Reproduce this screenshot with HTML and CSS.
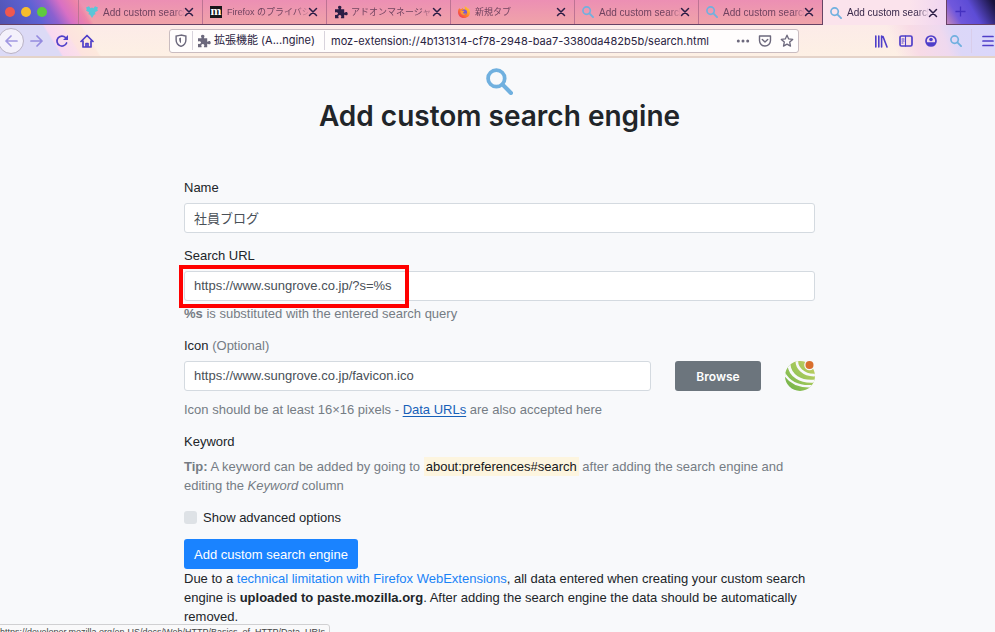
FILE: index.html
```html
<!DOCTYPE html>
<html lang="en">
<head>
<meta charset="utf-8">
<title>Add custom search engine</title>
<link rel="stylesheet" href="styles.css">
</head>
<body>
<svg class="defs" aria-hidden="true">
  <symbol id="lens" viewBox="0 0 26 26"><circle cx="10" cy="10" r="8" fill="none" stroke="#70b0df" stroke-width="3.6"/><path d="M16 16l8 8" stroke="#70b0df" stroke-width="4" stroke-linecap="round"/></symbol>
  <symbol id="close" viewBox="0 0 10 10"><path d="M1.5 1.5l7 7m0-7l-7 7" stroke="#2b1d45" stroke-width="1.5" stroke-linecap="round"/></symbol>
  <symbol id="puzzle" viewBox="0 0 14 14"><path d="M1 4.200h3.200c.5 0 .5-.5.1-1C3.500 2 4.300.8 5.700.8S8 2 7.200 3.200c-.4.6-.3 1 .2 1h2.800v3c0 .5.4.6 1 .2 1.200-.8 2.500-.1 2.500 1.300s-1.300 2-2.500 1.300c-.6-.4-1-.2-1 .3v3H7.400c-.6 0-.7-.4-.3-1C7.800 11 7 9.900 5.800 9.900s-2 1.100-1.300 2.400c.3.600.2 1-.4 1H1V9.800c1.700.7 3-.1 3-1.200S2.700 6.800 1 7.500z"/></symbol>
</svg>

<header class="browser">
  <div class="tab-strip">
    <div class="window-controls"><button class="dot red" aria-label="Close window"></button><button class="dot yellow" aria-label="Minimise"></button><button class="dot green" aria-label="Zoom"></button></div>
    <div class="tab"><svg class="favicon" viewBox="0 0 12 12"><path d="M0 1.500L3 .3l1.500 2L6 1.500l1.500.8L9 .3l3 1.200-.8 1.700.8 1.300-2 1.200-1 .3.500 2.300-1.500.5L6 12 4 8.800l-1.500-.5L3 6 2 5.700 0 4.500l.8-1.300z" fill="#59c6d8"/></svg><span class="tab-title">Add custom search</span><button class="tab-close" aria-label="Close tab"><svg><use href="#close"/></svg></button></div>
    <div class="tab"><span class="favicon letter">m</span><span class="tab-title ja">Firefox のプライバシ</span><button class="tab-close" aria-label="Close tab"><svg><use href="#close"/></svg></button></div>
    <div class="tab"><svg class="favicon dark"><use href="#puzzle"/></svg><span class="tab-title ja">アドオンマネージャ</span><button class="tab-close" aria-label="Close tab"><svg><use href="#close"/></svg></button></div>
    <div class="tab"><svg class="favicon" viewBox="0 0 12 12"><defs><linearGradient id="fire" x1="1" y1="0" x2="0" y2="1"><stop offset="0" stop-color="#ffe13c"/><stop offset=".5" stop-color="#ff8426"/><stop offset="1" stop-color="#ed2766"/></linearGradient></defs><path d="M6 12C2 12 0 9.300 0 6c0-1.800.7-3.300 1.500-4l.4 1.200L3.500 3 5 1.800 5.200 3 7 3.200 6.500.2c2 .4 2.800 1.700 3 2.300l.5-.3c1.300 1 2 2.500 2 4C12 9.500 9.600 12 6 12z" fill="url(#fire)"/><circle cx="6.200" cy="6.200" r="2.800" fill="#7657d5"/><path d="M2.500 4.600l3 .1 1 1-1.700.8c.8 1.500 2.700 1.400 3.700.5C8 9.500 3 10 2.500 6z" fill="#ff9b30"/></svg><span class="tab-title ja">新規タブ</span><button class="tab-close" aria-label="Close tab"><svg><use href="#close"/></svg></button></div>
    <div class="tab"><svg class="favicon"><use href="#lens"/></svg><span class="tab-title">Add custom search</span><button class="tab-close" aria-label="Close tab"><svg><use href="#close"/></svg></button></div>
    <div class="tab"><svg class="favicon"><use href="#lens"/></svg><span class="tab-title">Add custom search</span><button class="tab-close" aria-label="Close tab"><svg><use href="#close"/></svg></button></div>
    <div class="tab active"><svg class="favicon"><use href="#lens"/></svg><span class="tab-title">Add custom search</span><button class="tab-close" aria-label="Close tab"><svg><use href="#close"/></svg></button></div>
    <button class="new-tab" aria-label="New tab"><svg viewBox="0 0 12 12"><path d="M6 .5v11M.5 6h11" stroke="#4430c0" stroke-width="1.400"/></svg></button>
  </div>
  <div class="toolbar">
    <nav class="nav-buttons">
      <button class="back" aria-label="Back"><svg viewBox="0 0 14 14"><path d="M13 7H2m5-5L2 7l5 5"/></svg></button>
      <button class="forward" aria-label="Forward"><svg viewBox="0 0 14 14"><path d="M1 7h11M7 2l5 5-5 5"/></svg></button>
      <button aria-label="Reload"><svg viewBox="0 0 14 14"><path d="M11.600 9A5 5 0 1 1 10.500 3.500L12 5"/><path d="M13 1v5H8z" fill="#4f3fc9" stroke="none"/></svg></button>
      <button aria-label="Home"><svg viewBox="0 0 14 14"><path d="M1 7.500l6-6 6 6M3 7v6h8V7M6 13V9.500h2V13"/></svg></button>
    </nav>
    <div class="url-bar">
      <svg class="shield" viewBox="0 0 12 12"><path d="M6 1L1.500 2v3.500C1.500 8.500 3.500 10.500 6 11.400c2.500-.9 4.500-2.900 4.500-5.900V2z" fill="none" stroke="#6c687c" stroke-width="1.300"/><path d="M6 3.300v5.200C4.800 7.800 4.300 6.500 4.300 4z" fill="#6c687c"/></svg>
      <span class="identity"><svg><use href="#puzzle"/></svg>拡張機能 (A...ngine)</span>
      <input class="address" aria-label="Address" value="moz-extension://4b131314-cf78-2948-baa7-3380da482b5b/search.html">
      <button aria-label="Page actions"><svg viewBox="0 0 14 14" fill="#6c687c"><circle cx="2.300" cy="7" r="1.500"/><circle cx="7" cy="7" r="1.500"/><circle cx="11.700" cy="7" r="1.500"/></svg></button>
      <button aria-label="Save to Pocket"><svg viewBox="0 0 14 14"><path d="M1.500 2h11v4.500a5.500 5.500 0 0 1-11 0zM4.300 5.500L7 8l2.700-2.500" fill="none" stroke="#6c687c" stroke-width="1.400" stroke-linejoin="round" stroke-linecap="round"/></svg></button>
      <button aria-label="Bookmark"><svg viewBox="0 0 14 14"><path d="M7 1.200l1.700 3.700 4 .5-3 2.700.8 4L7 10.100l-3.500 2 .8-4-3-2.700 4-.5z" fill="none" stroke="#6c687c" stroke-width="1.300" stroke-linejoin="round"/></svg></button>
    </div>
    <div class="tools">
      <button aria-label="Library"><svg viewBox="0 0 14 14"><path d="M1.800 2v11M4.800 2v11M7.600 2v11M9 2.500L13 13" stroke-width="1.600"/></svg></button>
      <button aria-label="Sidebars"><svg viewBox="0 0 14 14"><rect x="1" y="2" width="12" height="10" rx="1.500"/><path d="M6.500 2v10M3 5h2M3 7h2M3 9h1" stroke-width="1.100"/></svg></button>
      <button aria-label="Account"><svg viewBox="0 0 14 14"><circle cx="7" cy="7" r="5"/><circle cx="7" cy="5.500" r="1.800" fill="#4f3fc9" stroke="none"/><path d="M2.500 8.200h9c0 5-9 5-9 0z" fill="#4f3fc9" stroke="none"/></svg></button>
      <button aria-label="Search"><svg class="small-lens"><use href="#lens"/></svg></button>
      <button class="menu" aria-label="Menu"><svg viewBox="0 0 14 14"><path d="M2 2.500h10M2 7h10M2 11.500h10"/></svg></button>
    </div>
  </div>
</header>

<main class="page">
  <div class="hero">
    <svg class="hero-icon"><use href="#lens"/></svg>
    <h1>Add custom search engine</h1>
  </div>
  <form class="form">
    <div class="field">
      <label for="name">Name</label>
      <input id="name" type="text" value="社員ブログ">
    </div>
    <div class="field">
      <label for="url">Search URL</label>
      <div class="marked">
        <input id="url" type="text" value="https://www.sungrove.co.jp/?s=%s">
        <span class="marker"></span>
      </div>
      <p class="help"><b>%s</b> is substituted with the entered search query</p>
    </div>
    <div class="field">
      <label for="icon">Icon <span class="muted">(Optional)</span></label>
      <div class="icon-row">
        <input id="icon" type="text" value="https://www.sungrove.co.jp/favicon.ico">
        <button type="button" class="btn secondary">Browse</button>
        <svg class="preview" viewBox="0 0 30 30"><defs><linearGradient id="leaf" x1="1" y1="0" x2="0" y2="1"><stop offset="0" stop-color="#c8cf62"/><stop offset=".5" stop-color="#9cc659"/><stop offset="1" stop-color="#6aae45"/></linearGradient><clipPath id="ball"><circle cx="15" cy="15" r="15"/></clipPath></defs><g clip-path="url(#ball)"><path d="M0 0h30v30H0z" fill="url(#leaf)"/><g fill="none" stroke="#f8f9fb"><path d="M-1 12C4 21 13 26.500 29 25" stroke-width="2.400"/><path d="M4 4C5 14 15 22 31 20" stroke-width="3"/><path d="M12-1C11 6 18 15 31 14" stroke-width="2.600"/></g></g><circle cx="24.500" cy="4" r="5.300" fill="#f8f9fb"/><circle cx="24.500" cy="4" r="4" fill="#d96f2d"/></svg>
      </div>
      <p class="help spaced">Icon should be at least 16×16 pixels - <a class="hovered" href="#">Data URLs</a> are also accepted here</p>
    </div>
    <section class="field">
      <h2>Keyword</h2>
      <p class="help"><b>Tip:</b> A keyword can be added by going to <mark>about:preferences#search</mark> after adding the search engine and editing the <i>Keyword</i> column</p>
    </section>
    <div class="check"><input type="checkbox" id="advanced"><label for="advanced">Show advanced options</label></div>
    <button type="button" class="btn primary">Add custom search engine</button>
    <p class="notice">Due to a <a href="#">technical limitation with Firefox WebExtensions</a>, all data entered when creating your custom search engine is <b>uploaded to paste.mozilla.org</b>. After adding the search engine the data should be automatically removed.</p>
  </form>
</main>
<div class="status">https://developer.mozilla.org/en-US/docs/Web/HTTP/Basics_of_HTTP/Data_URIs</div>
</body>
</html>
```

FILE: styles.css
```css
* { box-sizing: border-box; }
body {
  margin: 0;
  height: 100vh;
  overflow: hidden;
  background: #f8f9fb;
  color: #212529;
  font: 13px/19px "Liberation Sans", "Noto Sans CJK JP", sans-serif;
}
button, input { font: inherit; color: inherit; }
button { border: 0; padding: 0; background: none; }
p, h1, h2 { margin: 0; }
.defs { position: absolute; width: 0; height: 0; }

.browser {
  background:
    linear-gradient(58deg, #4a4b9c 0, #5d62d4 54px, #8c61cf 68px, #d870c4 80px, #ee84a8 94px, transparent 98px) no-repeat left top / 130px 58px,
    linear-gradient(60deg, transparent 30px, #7058dc 50px, #5d4cd6 66px, #17123c 88px) no-repeat right top / 90px 25px,
    linear-gradient(#ec8fb4, #f0a4a8 25px, #f5b98e);
  font-family: Inter, "Noto Sans CJK JP", sans-serif;
}
.tab-strip { display: flex; height: 25px; border-bottom: 1px solid #674264; }
.window-controls { flex: 0 0 78px; display: flex; align-items: center; gap: 6px; padding-left: 5px; }
.dot { width: 10px; height: 10px; border-radius: 50%; }
.red { background: #f0584e; }
.yellow { background: #f7bd2e; }
.green { background: #5fca3e; }
.tab {
  flex: 0 1 124px;
  min-width: 0;
  display: flex;
  align-items: center;
  padding: 0 8px 0 7px;
  border-left: 1px solid #bd7393;
  color: #70435f;
  font-size: 10px;
}
.favicon { flex: none; width: 12px; height: 12px; margin-right: 5px; }
.favicon.dark { width: 14px; height: 14px; margin-right: 3px; fill: #2b1d45; }
.letter { background: #17151a; color: #fff; font: bold 13px/10px "Liberation Serif", serif; text-align: center; }
.tab-title {
  flex: 1;
  min-width: 0;
  overflow: hidden;
  white-space: nowrap;
  font-family: "Liberation Sans", "Noto Sans CJK JP", sans-serif;
  mask-image: linear-gradient(90deg, #000 85%, #0003);
}
.tab-title.ja { font-size: 9px; }
.tab-close { flex: none; width: 10px; height: 10px; }
.tab-close svg { display: block; width: 10px; height: 10px; }
.tab.active { height: 25px; background: linear-gradient(90deg, #fbe3ec 70%, #f0d5f1); color: #39294b; border-left-color: #674264; }
.new-tab { width: 27px; border-left: 1px solid #674264; }
.new-tab svg { width: 11px; height: 11px; }

.toolbar {
  display: flex;
  align-items: center;
  height: 33px;
  border-bottom: 2px solid #e4d3c9;
  background:
    linear-gradient(58deg, #dcdaf6 52px, #f8d8f0 54px, #fbdfe9 68px, #fde3df 70px, #fde8dc 84px, transparent 86px) no-repeat left top / 120px 31px,
    linear-gradient(70deg, transparent 30px, #f8dbe6 52px, #efd9ef 80px, #dcd7f8 92px, #dad7fb) no-repeat right top / 130px 31px,
    linear-gradient(#fcebe8, #fdf0e4);
}
.nav-buttons { flex: 0 0 169px; display: flex; align-items: center; }
.nav-buttons button { width: 25px; height: 26px; display: grid; place-items: center; }
.nav-buttons svg, .tools svg { width: 14px; height: 14px; fill: none; stroke: #4f3fc9; stroke-width: 1.7; stroke-linecap: round; stroke-linejoin: round; }
.nav-buttons .back { width: 26px; margin-left: -2px; border: 1px solid #b9b2c4; border-radius: 50%; background: #f4f1fb; }
.back svg, .forward svg { opacity: .5; }
.url-bar {
  flex: 1;
  min-width: 0;
  display: flex;
  align-items: center;
  height: 24px;
  padding: 0 0 0 4px;
  border: 1px solid #c9bcc0;
  border-radius: 3px;
  background: #fffdfd;
  color: #29223f;
  font-size: 11px;
}
.shield { width: 14px; height: 13px; }
.identity { display: flex; align-items: center; gap: 3px; margin-left: 4px; padding: 0 9px 0 4px; border: solid #d8d3dc; border-width: 0 1px; white-space: nowrap; }
.identity svg { width: 14px; height: 14px; fill: #6c687c; }
.address { flex: 1; min-width: 0; padding: 2px 6px 0; border: 0; background: none; outline: 0; }
.url-bar button { width: 22px; height: 20px; display: grid; place-items: center; }
.url-bar button svg { width: 14px; height: 14px; }
.tools { flex: 0 0 196px; display: flex; justify-content: flex-end; }
.tools button { width: 25px; height: 24px; display: grid; place-items: center; }
.tools .small-lens { width: 12px; height: 12px; }
.tools .menu { width: 24px; margin-left: 3px; border-left: 1px solid #d9cdea; padding-left: 9px; }

.page { padding: 10px 24px 0 28px; }
.hero { text-align: center; }
.hero-icon { display: block; width: 27px; height: 27px; margin: 0 auto; }
h1 { font: 600 28px/42px Inter, sans-serif; }
.form { max-width: 631px; margin: 41px auto 0; }
.field { margin-bottom: 13px; }
.field > label { display: block; margin-bottom: 6px; }
h2 { font-size: 13px; line-height: 19px; font-weight: 400; margin-bottom: 6px; }
input[type="text"] {
  display: block;
  width: 100%;
  height: 30px;
  padding: 0 9px 2px;
  border: 1px solid #d4dae0;
  border-radius: 3px;
  background: #fff;
  color: #495057;
}
.marked { position: relative; }
.marker { position: absolute; top: -6px; left: -5px; width: 230px; height: 43px; border: 4px solid #f00; z-index: 1; }
.help, .muted { color: #757c84; }
.help { margin-top: 3px; }
.help.spaced { margin-top: 9px; }
h2 + .help { margin-top: 0; }
.icon-row { display: grid; grid-template-columns: 1fr 86px 30px; gap: 24px; align-items: center; }
.preview { width: 30px; height: 30px; }
a { color: #1a83f7; text-decoration: none; }
a.hovered { color: #1760b8; text-decoration: underline; text-underline-offset: 2px; }
mark { padding: 2px; background: #fdf5df; color: #16181b; }
.btn { height: 30px; padding: 0 10px; border-radius: 3px; color: #fff; white-space: nowrap; }
.secondary { background: #6c757d; font-family: Inter, sans-serif; font-size: 12px; font-weight: 600; }
.primary { display: block; background: #1a83ff; }
.check { display: flex; align-items: center; gap: 6px; margin-bottom: 12px; }
.check input { appearance: none; width: 13px; height: 13px; margin: 0; border-radius: 3px; background: #dee2e6; }
.status {
  position: fixed;
  left: -5px;
  top: 624px;
  padding: 0 4px;
  border: 1px solid #d0d0d2;
  border-radius: 3px;
  background: #f9f9fa;
  color: #444;
  font-size: 9px;
  line-height: 14px;
  white-space: nowrap;
}
```
